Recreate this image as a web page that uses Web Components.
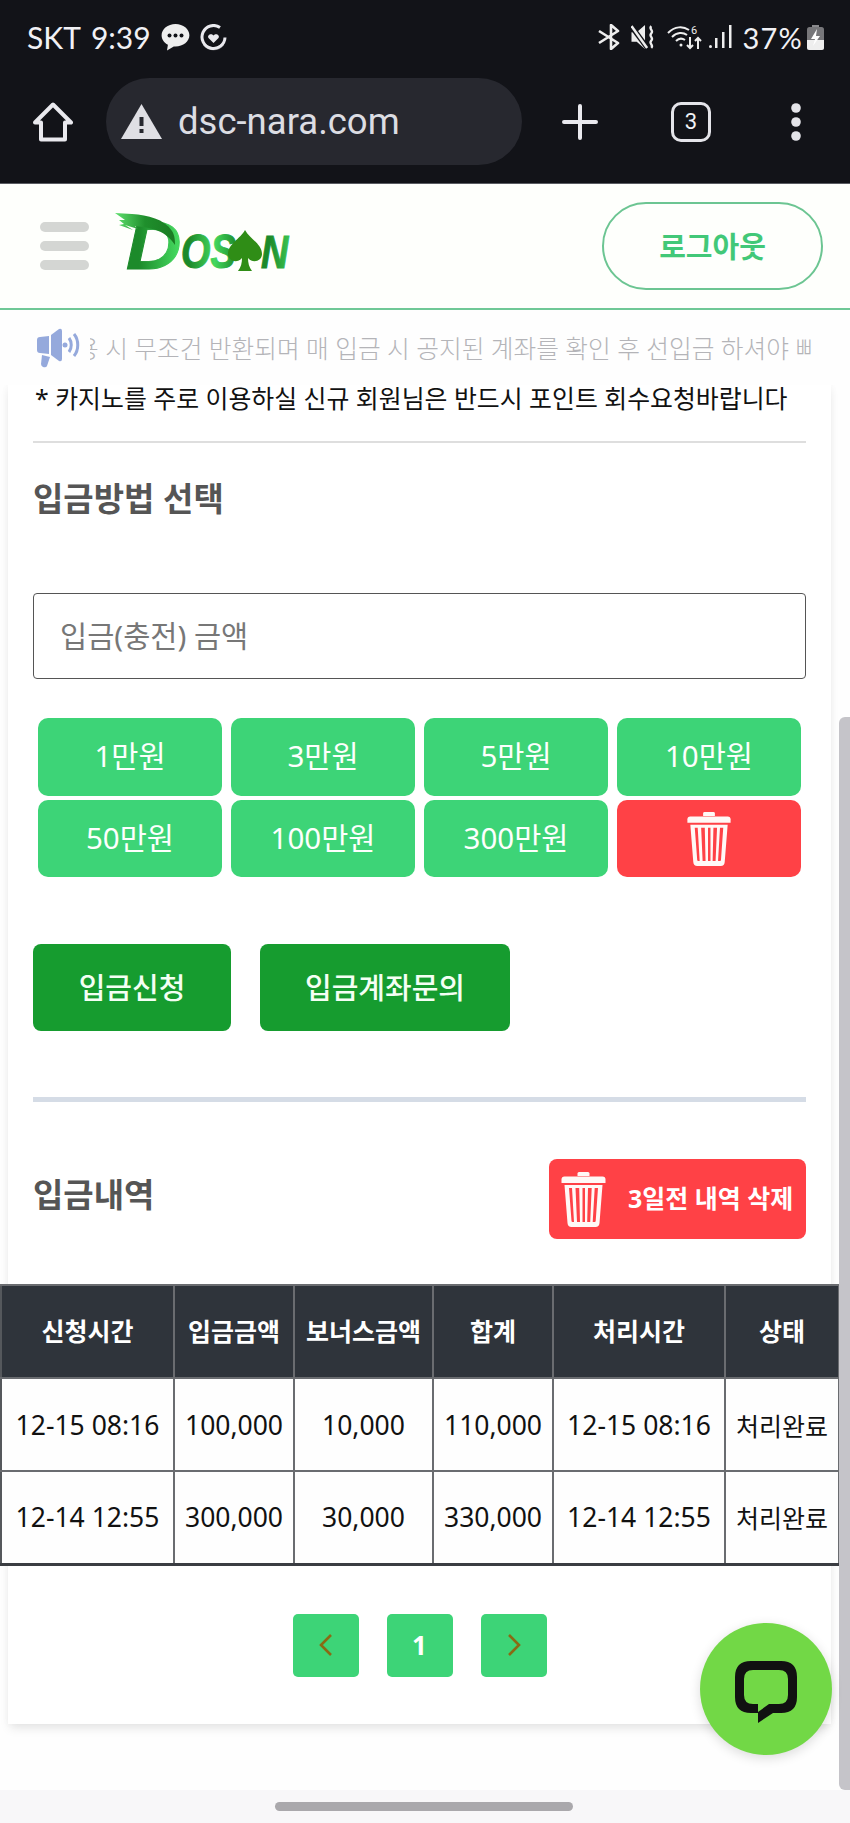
<!DOCTYPE html>
<html lang="ko">
<head>
<meta charset="utf-8">
<title>DOSAN</title>
<style>
  html, body { margin: 0; padding: 0; }
  body {
    width: 850px;
    height: 1823px;
    overflow: hidden;
    display: flex;
    flex-direction: column;
    position: relative;
    background: #fefefe;
    font-family: "Noto Sans", "Noto Sans CJK KR", sans-serif;
  }
</style>
</head>
<body>
<phone-chrome></phone-chrome>
<site-header></site-header>
<notice-bar>시 무조건 반환되며 매 입금 시 공지된 계좌를 확인 후 선입금 하셔야 빠른 충전이 가능합니다</notice-bar>
<page-main>
  <deposit-card></deposit-card>
</page-main>
<nav-bar></nav-bar>
<page-scrollbar></page-scrollbar>
<chat-fab></chat-fab>

<script>
const KR = `"Noto Sans", "Noto Sans CJK KR", sans-serif`;
const TRASH = /*html*/`
  <svg viewBox="0 0 44 56" width="100%" height="100%" fill="#fff8f6">
    <path d="M16 2.5q0-1.5 1.5-1.5h9q1.500 0 1.500 1.500v2.500h-12z"/>
    <path d="M3 5.500h38q3 0 3 3v3.500h-44v-3.500q0-3 3-3z"/>
    <path fill-rule="evenodd" d="M3 14h38l-3 38q-.3 4-4 4h-24q-3.700 0-4-4zM7.500 17l2.500 33q.1 1 1 1l1.500 0-2-34zM14 17l1.500 34h3l-.8-34zM21 17v34h2.500v-34zM26.500 17l-.8 34h3l1.500-34zM33.200 17l-2 34h2q.9 0 1-1l2.300-33z"/>
  </svg>`;

function define(name, css, html) {
    customElements.define(name, class extends HTMLElement {
        constructor() {
            super();
            this.attachShadow({ mode: 'open' });
            this.shadowRoot.innerHTML = `<style>:host, * { box-sizing: border-box; } ${css}</style>${html}`;
        }
    });
}

define('phone-chrome', /*css*/`
    :host {
        display: block;
        flex: none;
        height: 184px;
        background: #121318;
        border-bottom: 1px solid #5a5c62;
        color: #f1f1f5;
    }
    .status {
        display: flex;
        align-items: center;
        height: 74px;
        padding: 0 26px 0 27px;
        font-family: Lato, sans-serif;
        font-size: 30px;
        font-weight: 400;
    }
    .time { margin: 0 10px 0 10px; }
    .spacer { flex: 1; }
    svg { display: block; flex: none; }
    .pct { margin: 0 4px 0 11px; letter-spacing: 1.200px; font-size: 29px; }
    .bar {
        display: flex;
        align-items: center;
        height: 109px;
        padding-bottom: 14px;
    }
    .pill {
        display: flex;
        align-items: center;
        width: 416px;
        height: 87px;
        margin-left: 33px;
        padding-left: 15px;
        border-radius: 44px;
        background: #27282f;
        font-family: Roboto, sans-serif;
        font-size: 36.500px;
        color: #dcdde3;
    }
    .pill span { margin-left: 16px; }
    .tab {
        width: 40px;
        height: 40px;
        border: 3px solid #e4e4e9;
        border-radius: 10px;
        display: flex;
        align-items: center;
        justify-content: center;
        font: 22px Roboto, sans-serif;
    }
`, /*html*/`
    <div class="status">
        <span>SKT</span><span class="time">9:39</span>
        <svg width="29" height="28" viewBox="0 0 29 28"><path fill="#eee" d="M14.500 1C6.800 1 .6 6 .6 12.300c0 4 2.500 7.500 6.300 9.500L6 27.500l6.800-4.100c.6.1 1.100.1 1.700.1 7.700 0 13.900-5 13.900-11.200S22.200 1 14.500 1z"/><circle cx="8.500" cy="12.500" r="2" fill="#121318"/><circle cx="14.500" cy="12.500" r="2" fill="#121318"/><circle cx="20.500" cy="12.500" r="2" fill="#121318"/></svg>
        <svg style="margin-left:10px" width="27" height="27" viewBox="0 0 27 27" fill="none" stroke="#e9e9ee" stroke-width="3"><path d="M20 3.500A11.500 11.500 0 1 0 25 13.500"/><path d="M4 20a12 12 0 0 0 19 0" opacity=".5"/><path fill="#e9e9ee" stroke="none" d="M13.500 19l-5-5c-1.800-2.500 2.500-5.500 5-2.500 2.500-3 6.800 0 5 2.500z"/></svg>
        <div class="spacer"></div>
        <svg width="24" height="26" viewBox="0 0 22 26" fill="none" stroke="#eee" stroke-width="2.600" stroke-linejoin="round"><path d="M1 7l19 12-7 6V1l7 6L1 19"/></svg>
        <svg style="margin-left:10px" width="27" height="26" viewBox="0 0 25 25"><path fill="#eee" d="M0 8h5l8-7v23l-8-7H0z"/><path stroke="#121318" stroke-width="5" d="M-1 1l17 23"/><path stroke="#eee" stroke-width="2.400" d="M0 2l15 21"/><path fill="none" stroke="#eee" stroke-width="2.200" d="M19 2c-3 3 3 4 0 7s3 4 0 7 3 4 0 7"/></svg>
        <svg style="margin-left:9px" width="35" height="25" viewBox="0 0 35 25" fill="none" stroke="#eee" stroke-width="2"><path d="M1 8c7-7 15-7 21-3"/><path d="M5 12c5-5 11-5 15-2"/><path d="M9 16c3-3 6-3 9-1"/><circle cx="14" cy="20" r="1.500" fill="#eee" stroke="none"/><text x="24" y="9" font-size="11" fill="#eee" stroke="none" font-family="Roboto">6</text><path d="M23 12v11m-3-3l3 3 3-3M31 24V13m-3 3l3-3 3 3"/></svg>
        <svg style="margin-left:7px" width="23" height="24" viewBox="0 0 23 24" fill="#eee"><rect x="0" y="20" width="3" height="3" rx="1.500"/><rect x="6" y="13" width="2.500" height="10"/><rect x="13" y="7" width="2.500" height="16"/><rect x="20" y="0" width="2.500" height="23"/></svg>
        <span class="pct">37%</span>
        <svg width="17" height="25" viewBox="0 0 17 25"><rect x="5" y="0" width="7" height="3" fill="#8a8a8d"/><rect y="2" width="17" height="23" rx="2.500" fill="#77777a"/><path d="M0 15h17v7.500q0 2.500-2.500 2.500h-12q-2.500 0-2.500-2.500z" fill="#eee"/><path fill="#fff" d="M10 4L4 14h4l-2 7 7-10H9z"/></svg>
    </div>
    <div class="bar">
        <svg style="margin-left:33px" width="40" height="40" viewBox="0 0 40 40" fill="none" stroke="#e9e9ee" stroke-width="4" stroke-linejoin="round"><path d="M20 2.500L38 20.500H32V37.500H8V20.500H2Z"/></svg>
        <div class="pill">
            <svg width="41" height="35" viewBox="0 0 41 35"><path fill="#dfdfe4" d="M20.500 0L41 35H0z"/><rect x="18.500" y="13" width="4" height="9" fill="#27282f"/><rect x="18.500" y="25" width="4" height="4" fill="#27282f"/></svg>
            <span>dsc-nara.com</span>
        </div>
        <svg style="margin-left:40px" width="36" height="36" viewBox="0 0 36 36" stroke="#e9e9ee" stroke-width="4" stroke-linecap="round"><path d="M18 2v32M2 18h32"/></svg>
        <div class="tab" style="margin-left:73px">3</div>
        <svg style="margin-left:75px" width="20" height="40" viewBox="0 0 20 40" fill="#e4e4e9"><circle cx="10" cy="6" r="4.800"/><circle cx="10" cy="20" r="4.800"/><circle cx="10" cy="34" r="4.800"/></svg>
    </div>
`);

define('site-header', /*css*/`
    :host {
        display: flex;
        flex: none;
        align-items: center;
        height: 126px;
        padding: 0 27px 0 40px;
        background: #fefffc;
        border-bottom: 2px solid #6fc896;
    }
    .burger { display: flex; flex-direction: column; gap: 9px; width: 49px; }
    .burger i { display: block; height: 10px; border-radius: 5px; background: #d4d6d3; }
    .logo { display: block; margin: -6px 0 0 26px; }
    .spacer { flex: 1; }
    .logout {
        display: flex;
        align-items: center;
        justify-content: center;
        width: 221px;
        height: 88px;
        padding-bottom: 2px;
        border: 2px solid #6cc592;
        border-radius: 44px;
        font: 600 29px ${KR};
        color: #42c878;
    }
`, /*html*/`
    <div class="burger"><i></i><i></i><i></i></div>
    <svg class="logo" width="176" height="60" viewBox="0 0 176 60">
        <defs>
            <linearGradient id="lg" gradientUnits="userSpaceOnUse" x1="10" y1="0" x2="176" y2="0">
                <stop offset="0" stop-color="#1c8a2a"/><stop offset=".18" stop-color="#44d85e"/>
                <stop offset=".34" stop-color="#1c8a2a"/><stop offset=".48" stop-color="#35c44d"/>
                <stop offset=".62" stop-color="#2aa63a"/><stop offset=".85" stop-color="#2f8d16"/><stop offset="1" stop-color="#3aa82a"/>
            </linearGradient>
            <linearGradient id="lb" x1="0" y1="0" x2="1" y2="0">
                <stop offset="0" stop-color="#5fe06e"/><stop offset=".5" stop-color="#1f8f2c"/><stop offset="1" stop-color="#1a7a22"/>
            </linearGradient>
        </defs>
        <text x="0" y="0" transform="translate(11 56) scale(1.300 1.160)" font-family="Liberation Sans, sans-serif" font-weight="700" font-style="italic" font-size="59" fill="url(#lg)" stroke="url(#lg)" stroke-width=".8">D</text>
        <path fill="url(#lb)" d="M0 0l17 1c16 1 32 5 40 17 3 5 3 10 3 14-9-14-22-17-40-19l3 3-13-4 8 5L4 12l5-1-5-4 6 0z"/>
        <text x="0" y="0" transform="translate(66 55) scale(.84 1.060)" font-family="Liberation Sans, sans-serif" font-weight="700" font-style="italic" font-size="45" fill="url(#lg)" stroke="url(#lg)" stroke-width="1">OS</text>
        <path fill="#2f8d16" d="M130 17c5 9 17 14 17 24 0 7-9 10-14 4 0 5 1 9 4 13h-14c3-4 4-8 4-13-5 6-14 3-14-4 0-10 12-15 17-24z"/>
        <text x="0" y="0" transform="translate(146 55) scale(.88 1.060)" font-family="Liberation Sans, sans-serif" font-weight="700" font-style="italic" font-size="43" fill="url(#lg)" stroke="url(#lg)" stroke-width="1">N</text>
    </svg>
    <div class="spacer"></div>
    <div class="logout">로그아웃</div>
`);

define('notice-bar', /*css*/`
    :host {
        display: flex;
        flex: none;
        align-items: center;
        height: 75px;
        padding: 0 38px 0 37px;
        background: #fefefe;
        position: relative;
        z-index: 2;
    }
    svg { display: block; flex: none; }
    .track {
        flex: 1;
        min-width: 0;
        margin-left: 10px;
        overflow: hidden;
        white-space: nowrap;
        font: 300 24.700px ${KR};
        color: #b4b4b8;
        padding-bottom: 2px;
    }
    .lead { margin-left: -14px; }
`, /*html*/`
    <svg width="43" height="40" viewBox="0 0 43 40" fill="#95a9dc">
        <path d="M0 12q0-3 3-3l9-1v18l-9-1q-3 0-3-3z"/>
        <path d="M14 7l8-6q3-1 3 2v28q0 3-3 2l-8-6z"/>
        <path d="M5 27l8 2-3 9q-1 2-4 1-2-1-2-3z"/>
        <circle cx="28" cy="17" r="2.500"/>
        <path fill="none" stroke="#95a9dc" stroke-width="3" d="M32 10c3 4 3 10 0 14M37 6c5 6 5 16 0 22"/>
    </svg>
    <div class="track"><span class="lead">용</span> <slot></slot></div>
`);

define('page-main', /*css*/`
    :host { display: block; flex: 1; min-height: 0; overflow: hidden; background: #fefefe; }
`, `<slot></slot>`);

define('amount-grid', /*css*/`
    :host {
        display: grid;
        grid-template-columns: repeat(4, 184px);
        grid-template-rows: 78px 77px;
        gap: 4px 9px;
        margin: 39px 0 0 5px;
    }
    div {
        display: flex;
        align-items: center;
        justify-content: center;
        padding-bottom: 5px;
        border-radius: 10px;
        background: #3dd477;
        color: #fdfffd;
        font: 400 29.500px ${KR};
    }
    .del { padding-bottom: 0; background: #ff4146; }
    .del span { display: block; width: 44px; height: 55px; }
`, /*html*/`
    <div>1만원</div><div>3만원</div><div>5만원</div><div>10만원</div>
    <div>50만원</div><div>100만원</div><div>300만원</div>
    <div class="del"><span>${TRASH}</span></div>
`);

define('history-table', /*css*/`
    :host { display: block; width: 838px; margin: 45px 0 0 -33px; }
    table {
        width: 838px;
        table-layout: fixed;
        border-collapse: collapse;
        border-bottom: 3px solid #3a3d42;
        font: 400 26.500px ${KR};
        color: #111;
        background: #fefefe;
    }
    th, td {
        height: 93px;
        padding: 0;
        text-align: center;
        border: 2px solid #6a6c70;
        white-space: nowrap;
    }
    th { padding-bottom: 3px; background: #2f343b; color: #fff; font-size: 25px; font-weight: 700; }
    th:first-child, td:first-child { border-left: 2px solid #55585c; }
    .status { font-size: 25px; }
`, /*html*/`
    <table>
        <colgroup><col style="width:173px"><col style="width:120px"><col style="width:139px"><col style="width:120px"><col style="width:172px"><col style="width:114px"></colgroup>
        <tr><th>신청시간</th><th>입금금액</th><th>보너스금액</th><th>합계</th><th>처리시간</th><th>상태</th></tr>
        <tr><td>12-15 08:16</td><td>100,000</td><td>10,000</td><td>110,000</td><td>12-15 08:16</td><td class="status">처리완료</td></tr>
        <tr><td>12-14 12:55</td><td>300,000</td><td>30,000</td><td>330,000</td><td>12-14 12:55</td><td class="status">처리완료</td></tr>
    </table>
`);

define('pager-row', /*css*/`
    :host { display: flex; justify-content: center; gap: 28px; margin: 48px 0 0; }
    div {
        display: flex;
        align-items: center;
        justify-content: center;
        width: 66px;
        height: 63px;
        border-radius: 5px;
        background: #3dd477;
        color: #fff;
        font: 700 26px ${KR};
    }
    svg { display: block; }
`, /*html*/`
    <div><svg width="14" height="22" viewBox="0 0 14 22" fill="none" stroke="#8a6a14" stroke-width="2.600"><path d="M12 1L2 11l10 10"/></svg></div>
    <div>1</div>
    <div><svg width="14" height="22" viewBox="0 0 14 22" fill="none" stroke="#8a6a14" stroke-width="2.600"><path d="M2 1l10 10L2 21"/></svg></div>
`);

define('deposit-card', /*css*/`
    :host {
        display: block;
        margin: 0 19px 0 8px;
        padding: 0 25px 47px 25px;
        background: #fff;
        box-shadow: 0 0 8px rgba(0, 0, 0, .03), 0 6px 10px -2px rgba(0, 0, 0, .1);
        color: #111;
    }
    .note { height: 30px; margin: -2px 0 0 2px; font: 400 24.900px/30px ${KR}; white-space: nowrap; }
    hr { margin: 28px 0 0; border: 0; height: 2px; background: #dedede; }
    h2 { margin: 0; font: 700 33px/40px ${KR}; color: #555; }
    .first { margin-top: 36px; }
    .input {
        display: flex;
        align-items: center;
        height: 86px;
        margin-top: 74px;
        padding: 0 0 4px 26px;
        border: 1px solid #555;
        border-radius: 4px;
        font: 400 29.500px ${KR};
        color: #777;
    }
    .actions { display: flex; gap: 29px; margin-top: 67px; }
    .actions div {
        display: flex;
        align-items: center;
        justify-content: center;
        height: 87px;
        padding-bottom: 3px;
        border-radius: 8px;
        background: #169c2f;
        color: #f4fff4;
        font: 500 29px ${KR};
    }
    .sep { height: 5px; margin-top: 66px; background: #d5dce6; }
    .head { display: flex; align-items: center; justify-content: space-between; margin-top: 57px; }
    .head h2 { padding-bottom: 8px; }
    .wipe {
        display: flex;
        align-items: center;
        width: 257px;
        height: 80px;
        padding-left: 12px;
        border-radius: 8px;
        background: #ff4146;
        color: #fff;
        font: 700 25px ${KR};
        white-space: nowrap;
    }
    .wipe span { display: block; width: 45px; height: 56px; margin-right: 22px; flex: none; }
    .wipe b { font-weight: inherit; padding-bottom: 5px; }
`, /*html*/`
    <div class="note">* 카지노를 주로 이용하실 신규 회원님은 반드시 포인트 회수요청바랍니다</div>
    <hr>
    <h2 class="first">입금방법 선택</h2>
    <div class="input">입금(충전) 금액</div>
    <amount-grid></amount-grid>
    <div class="actions">
        <div style="width:198px">입금신청</div>
        <div style="width:250px">입금계좌문의</div>
    </div>
    <div class="sep"></div>
    <div class="head">
        <h2>입금내역</h2>
        <div class="wipe"><span>${TRASH}</span><b>3일전 내역 삭제</b></div>
    </div>
    <history-table></history-table>
    <pager-row></pager-row>
`);

define('nav-bar', /*css*/`
    :host {
        display: flex;
        flex: none;
        justify-content: center;
        height: 33px;
        padding-top: 12px;
        background: #f8f7f9;
    }
    i { display: block; width: 298px; height: 9px; border-radius: 5px; background: #aaa8ac; margin-right: 2px; }
`, `<i></i>`);

define('page-scrollbar', /*css*/`
    :host {
        position: absolute;
        left: 839px;
        top: 717px;
        width: 11px;
        height: 1073px;
        border-radius: 6px 0 0 6px;
        background: #c5c4c9;
    }
`, ``);

define('chat-fab', /*css*/`
    :host {
        position: absolute;
        left: 700px;
        top: 1623px;
        width: 132px;
        height: 132px;
        border-radius: 50%;
        background: #72d846;
        box-shadow: 0 3px 12px rgba(0, 0, 0, .14);
        display: flex;
        align-items: center;
        justify-content: center;
    }
    svg { display: block; margin-top: 6px; }
`, /*html*/`
    <svg width="62" height="62" viewBox="0 0 62 62">
        <path fill="#111" fill-rule="evenodd" d="M16 0h30q16 0 16 16v20q0 16-16 16H38L23 62V52h-7Q0 52 0 36V16Q0 0 16 0zM18 9Q9 9 9 18v16q0 9 9 9h5v8l11-8h10q9 0 9-9V18q0-9-9-9z"/>
    </svg>
`);
</script>
</body>
</html>
